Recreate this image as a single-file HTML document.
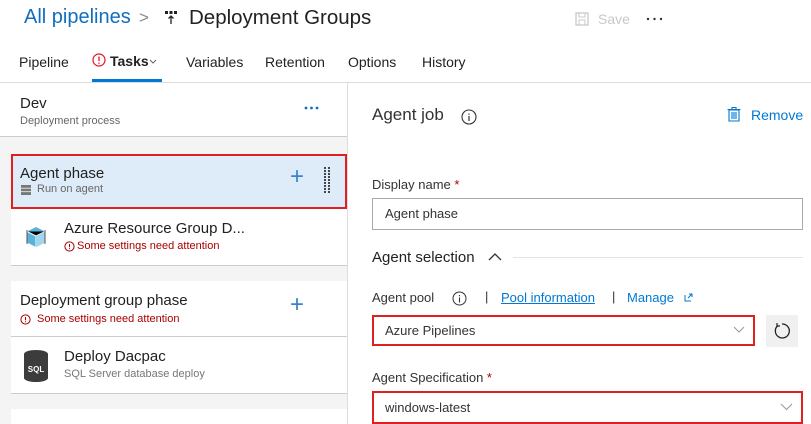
<!DOCTYPE html>
<html><head><style>
*{box-sizing:border-box;margin:0;padding:0}
body{width:811px;height:424px;overflow:hidden;background:#fff;font-family:"Liberation Sans",sans-serif;color:#212121;position:relative}
.a{position:absolute;white-space:nowrap}
.red{color:#a80000}
</style></head><body>
<div class="a" style="left:24px;top:6px;font-size:20px;color:#106ebe">All pipelines</div>
<div class="a" style="left:139px;top:8px;font-size:17px;color:#888">&gt;</div>
<svg class="a" style="left:164px;top:10px" width="14" height="16"><rect x="1" y="1" width="3" height="3" fill="#222"/><rect x="5.5" y="1" width="3" height="3" fill="#222"/><rect x="10" y="1" width="3" height="3" fill="#222"/><path d="M7 14V6M4.5 8.5L7 6l2.5 2.5" stroke="#222" stroke-width="1.3" fill="none"/></svg>
<div class="a" style="left:189px;top:6px;font-size:20.5px;color:#222">Deployment Groups</div>
<svg class="a" style="left:575px;top:12px" width="14" height="14"><rect x="1" y="1" width="12" height="12" fill="none" stroke="#c8c8c8" stroke-width="1.3"/><rect x="4" y="1" width="6" height="4" fill="none" stroke="#c8c8c8"/><rect x="4" y="8" width="6" height="5" fill="none" stroke="#c8c8c8"/></svg>
<div class="a" style="left:598px;top:11px;font-size:14px;color:#c8c8c8">Save</div>
<svg class="a" style="left:646px;top:17px" width="18" height="4"><circle cx="2" cy="2" r="1.2" fill="#333"/><circle cx="8.5" cy="2" r="1.2" fill="#333"/><circle cx="15" cy="2" r="1.2" fill="#333"/></svg>

<div class="a" style="left:19px;top:54px;font-size:14px">Pipeline</div>
<svg class="a" style="left:92px;top:53px" width="14" height="14"><circle cx="7" cy="7" r="6" fill="none" stroke="#e81123" stroke-width="1.2"/><path d="M7 3.5v4.5M7 9.5v1.3" stroke="#e81123" stroke-width="1.3"/></svg>
<div class="a" style="left:110px;top:53px;font-size:14px;font-weight:bold;color:#222">Tasks</div>
<svg class="a" style="left:149px;top:59px" width="8" height="5"><path d="M1 1l3 3 3-3" stroke="#666" fill="none"/></svg>
<div class="a" style="left:92px;top:79px;width:70px;height:3px;background:#0078d4"></div>
<div class="a" style="left:186px;top:54px;font-size:14px">Variables</div>
<div class="a" style="left:265px;top:54px;font-size:14px">Retention</div>
<div class="a" style="left:348px;top:54px;font-size:14px">Options</div>
<div class="a" style="left:422px;top:54px;font-size:14px">History</div>
<div class="a" style="left:0;top:82px;width:811px;height:1px;background:#ddd"></div>

<!-- left panel -->
<div class="a" style="left:0;top:83px;width:347px;height:341px;background:#f4f4f4"></div>
<div class="a" style="left:0;top:83px;width:347px;height:54px;background:#fff;border-bottom:1px solid #ccc"></div>
<div class="a" style="left:347px;top:83px;width:1px;height:341px;background:#ddd"></div>
<div class="a" style="left:20px;top:95px;font-size:15px">Dev</div>
<div class="a" style="left:20px;top:115px;font-size:11px;color:#666">Deployment process</div>
<svg class="a" style="left:304px;top:106px" width="16" height="4"><circle cx="2" cy="2" r="1.4" fill="#106ebe"/><circle cx="7.5" cy="2" r="1.4" fill="#106ebe"/><circle cx="13" cy="2" r="1.4" fill="#106ebe"/></svg>

<div class="a" style="left:11px;top:154px;width:336px;height:55px;background:#deecf9;border:2px solid #e02020"></div>
<div class="a" style="left:20px;top:165px;font-size:15px">Agent phase</div>
<svg class="a" style="left:21px;top:185px" width="10" height="10"><rect x="0" y="0" width="10" height="10" fill="#777"/><path d="M0 3.3h10M0 6.6h10" stroke="#ddd" stroke-width="1"/></svg>
<div class="a" style="left:37px;top:183px;font-size:11px;color:#666">Run on agent</div>
<div class="a" style="left:290px;top:163px;font-size:24px;color:#3b82d0;font-weight:300">+</div>
<svg class="a" style="left:323px;top:166px" width="8" height="28"><g fill="#111"><circle cx="2" cy="2" r="1"/><circle cx="6" cy="2" r="1"/><circle cx="2" cy="5" r="1"/><circle cx="6" cy="5" r="1"/><circle cx="2" cy="8" r="1"/><circle cx="6" cy="8" r="1"/><circle cx="2" cy="11" r="1"/><circle cx="6" cy="11" r="1"/><circle cx="2" cy="14" r="1"/><circle cx="6" cy="14" r="1"/><circle cx="2" cy="17" r="1"/><circle cx="6" cy="17" r="1"/><circle cx="2" cy="20" r="1"/><circle cx="6" cy="20" r="1"/><circle cx="2" cy="23" r="1"/><circle cx="6" cy="23" r="1"/><circle cx="2" cy="26" r="1"/><circle cx="6" cy="26" r="1"/></g></svg>

<div class="a" style="left:11px;top:209px;width:336px;height:57px;background:#fff;border-bottom:1px solid #ccc"></div>
<svg class="a" style="left:24px;top:224px" width="24" height="26"><path d="M12 3l9 4.5v11L12 23l-9-4.5v-11z" fill="#59b4d9"/><path d="M3 7.5L12 12l9-4.5M12 12v11" stroke="#fff" stroke-width="1"/><path d="M12 12v11l9-4.5v-11z" fill="#a0d6ee"/><path d="M3 6v14M21 6v14" stroke="#555" stroke-width="1"/></svg>
<div class="a" style="left:64px;top:220px;font-size:15px">Azure Resource Group D...</div>
<svg class="a" style="left:64px;top:241px" width="11" height="11"><circle cx="5.5" cy="5.5" r="4.6" fill="none" stroke="#a80000"/><path d="M5.5 3v3.3M5.5 7.3v1" stroke="#a80000"/></svg>
<div class="a red" style="left:77px;top:240px;font-size:11px">Some settings need attention</div>

<div class="a" style="left:11px;top:281px;width:336px;height:56px;background:#fff;border-bottom:1px solid #ccc"></div>
<div class="a" style="left:20px;top:292px;font-size:15px">Deployment group phase</div>
<svg class="a" style="left:20px;top:314px" width="11" height="11"><circle cx="5.5" cy="5.5" r="4.6" fill="none" stroke="#a80000"/><path d="M5.5 3v3.3M5.5 7.3v1" stroke="#a80000"/></svg>
<div class="a red" style="left:37px;top:313px;font-size:11px">Some settings need attention</div>
<div class="a" style="left:290px;top:291px;font-size:24px;color:#3b82d0;font-weight:300">+</div>

<div class="a" style="left:11px;top:337px;width:336px;height:57px;background:#fff;border-bottom:1px solid #ccc"></div>
<svg class="a" style="left:23px;top:349px" width="26" height="34"><path d="M1 5a12 4 0 0 1 24 0v24a12 4 0 0 1-24 0z" fill="#3c3c3c"/><text x="13" y="23" font-size="8" font-weight="bold" fill="#fff" text-anchor="middle" font-family="Liberation Sans">SQL</text></svg>
<div class="a" style="left:64px;top:348px;font-size:15px">Deploy Dacpac</div>
<div class="a" style="left:64px;top:368px;font-size:11px;color:#777">SQL Server database deploy</div>
<div class="a" style="left:11px;top:409px;width:336px;height:15px;background:#fff"></div>

<!-- right panel -->
<div class="a" style="left:372px;top:105px;font-size:17px;color:#333">Agent job</div>
<svg class="a" style="left:461px;top:109px" width="16" height="16"><circle cx="8" cy="8" r="7" fill="none" stroke="#333" stroke-width="1.1"/><path d="M8 7v5M8 4.5v1.2" stroke="#333" stroke-width="1.2"/></svg>
<svg class="a" style="left:727px;top:106px" width="14" height="16"><path d="M2 4h10v11H2zM0.5 3.5h13M5 3.5V1.5h4v2M5 6v7M7 6v7M9 6v7" stroke="#0078d4" fill="none" stroke-width="1.1"/></svg>
<div class="a" style="left:751px;top:107px;font-size:14px;color:#0078d4">Remove</div>

<div class="a" style="left:372px;top:177px;font-size:13px;color:#333">Display name <span class="red">*</span></div>
<div class="a" style="left:372px;top:198px;width:431px;height:32px;border:1px solid #aaa"></div>
<div class="a" style="left:385px;top:206px;font-size:13px;color:#333">Agent phase</div>

<div class="a" style="left:372px;top:249px;font-size:15px;color:#222">Agent selection</div>
<svg class="a" style="left:488px;top:252px" width="14" height="10"><path d="M1 8l6-6 6 6" stroke="#333" fill="none" stroke-width="1.3"/></svg>
<div class="a" style="left:513px;top:257px;width:290px;height:1px;background:#e4e4e4"></div>

<div class="a" style="left:372px;top:290px;font-size:13px;color:#333">Agent pool</div>
<svg class="a" style="left:452px;top:291px" width="15" height="15"><circle cx="7.5" cy="7.5" r="6.5" fill="none" stroke="#333"/><path d="M7.5 6.5v5M7.5 4v1.2" stroke="#333" stroke-width="1.1"/></svg>
<div class="a" style="left:485px;top:289px;font-size:13px;color:#333">|</div>
<div class="a" style="left:501px;top:290px;font-size:13px;color:#0078d4;text-decoration:underline">Pool information</div>
<div class="a" style="left:612px;top:289px;font-size:13px;color:#333">|</div>
<div class="a" style="left:627px;top:290px;font-size:13px;color:#0078d4">Manage</div>
<svg class="a" style="left:684px;top:293px" width="9" height="9"><path d="M1 2v6h6M4 5l4-4M5 1h3v3" stroke="#0078d4" fill="none"/></svg>

<div class="a" style="left:372px;top:315px;width:383px;height:31px;border:2px solid #e02020"></div>
<div class="a" style="left:385px;top:323px;font-size:13px;color:#333">Azure Pipelines</div>
<svg class="a" style="left:733px;top:326px" width="12" height="8"><path d="M1 1l5 5 5-5" stroke="#999" fill="none"/></svg>
<div class="a" style="left:766px;top:315px;width:32px;height:32px;background:#f0f0f0"></div>
<svg class="a" style="left:773px;top:322px" width="18" height="18"><path d="M5 3.5A7 7 0 1 0 9 2" stroke="#222" fill="none" stroke-width="1.3"/><path d="M4 1v3h3" stroke="#222" fill="none" stroke-width="1.2"/></svg>

<div class="a" style="left:372px;top:370px;font-size:13px;color:#333">Agent Specification <span class="red">*</span></div>
<div class="a" style="left:372px;top:391px;width:431px;height:33px;border:2px solid #e02020"></div>
<div class="a" style="left:385px;top:400px;font-size:13px;color:#333">windows-latest</div>
<svg class="a" style="left:780px;top:403px" width="13" height="8"><path d="M1 1l5.5 5.5L12 1" stroke="#999" fill="none"/></svg>
</body></html>
